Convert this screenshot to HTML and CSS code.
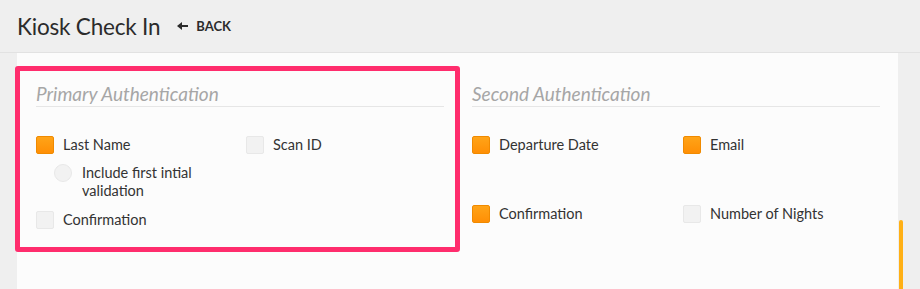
FILE: index.html
```html
<!DOCTYPE html>
<html lang="en">
<head>
    <meta charset="UTF-8">
    <meta name="viewport" content="width=device-width, initial-scale=1.0">
    <title>Kiosk Check In</title>
    <link rel="stylesheet" href="styles.css">
</head>
<body>
    <header class="topbar">
        <h1>Kiosk Check In</h1>
        <a class="back" href="#">
            <svg class="arrow" width="11" height="8" viewBox="0 0 11 8"><path d="M0 4 L5 0 L5 3 L11 3 L11 5 L5 5 L5 8 Z" fill="#2b2b2b"/></svg>
            BACK
        </a>
    </header>

    <main class="panel">
        <section class="auth-group highlight">
            <h2>Primary Authentication</h2>
            <div class="options">
                <div class="option-col">
                    <label class="check"><span class="box on"></span>Last Name</label>
                    <label class="radio"><span class="dot"></span>Include first intial<br>validation</label>
                    <label class="check"><span class="box"></span>Confirmation</label>
                </div>
                <div class="option-col">
                    <label class="check"><span class="box"></span>Scan ID</label>
                </div>
            </div>
        </section>

        <section class="auth-group second">
            <h2>Second Authentication</h2>
            <div class="options spaced">
                <label class="check"><span class="box on"></span>Departure Date</label>
                <label class="check"><span class="box on"></span>Email</label>
                <label class="check"><span class="box on"></span>Confirmation</label>
                <label class="check"><span class="box"></span>Number of Nights</label>
            </div>
        </section>

        <div class="scrollbar"></div>
    </main>
</body>
</html>
```

FILE: styles.css
```css
html, body {
    margin: 0;
    height: 100%;
}

body {
    font-family: "Lato", "Open Sans", sans-serif;
    color: #333;
    background: #efefef;
    overflow: hidden;
}

.topbar {
    height: 52px;
    display: flex;
    align-items: center;
    padding-left: 17px;
    border-bottom: 1px solid #e2e2e2;
}

.topbar h1 {
    margin: 0;
    font-size: 22.5px;
    font-weight: 400;
    color: #2b2b2b;
    letter-spacing: -0.2px;
}

.back {
    margin-left: 17px;
    display: flex;
    align-items: center;
    font-size: 13px;
    font-weight: 700;
    color: #2b2b2b;
    text-decoration: none;
}

.arrow {
    margin-right: 8px;
}

.panel {
    position: relative;
    margin: 0 22px 0 17px;
    height: calc(100% - 53px);
    background: #fcfcfc;
    display: flex;
    align-items: flex-start;
    padding-top: 13px;
    box-sizing: border-box;
}

.auth-group {
    width: 408px;
}

.auth-group h2 {
    margin: 0;
    padding-top: 10px;
    line-height: 25px;
    font-size: 19px;
    font-style: italic;
    font-weight: 400;
    color: #a6a6a6;
    border-bottom: 1px solid #e6e6e6;
}

.highlight {
    margin-left: -2px;
    border: 5px solid #ff2d6d;
    border-radius: 3px;
    padding: 0 11px 18px 16px;
}

.second {
    margin-left: 12px;
    padding-top: 5px;
}

.options {
    display: grid;
    grid-template-columns: 210px 1fr;
    margin-top: 29px;
}

.options.spaced {
    grid-template-columns: 211px 1fr;
    row-gap: 51px;
}

.option-col {
    display: flex;
    flex-direction: column;
}

.check, .radio {
    display: flex;
    align-items: center;
    font-size: 14.5px;
    line-height: 18px;
    color: #333;
}

.radio {
    align-items: flex-start;
    margin: 10px 0 11px 18px;
}

.box {
    width: 18px;
    height: 18px;
    margin-right: 9px;
    box-sizing: border-box;
    border: 1px solid #e8e8e8;
    border-radius: 2px;
    background: #f2f2f2;
    flex-shrink: 0;
}

.box.on {
    border-color: #f08a00;
    background: linear-gradient(#ffa418, #ff8f05);
}

.dot {
    width: 18px;
    height: 18px;
    margin-right: 10px;
    box-sizing: border-box;
    border: 1px solid #e8e8e8;
    border-radius: 50%;
    background: #f2f2f2;
    flex-shrink: 0;
}

.scrollbar {
    position: absolute;
    right: -5px;
    top: 167px;
    bottom: 0;
    width: 4px;
    border-radius: 2px 2px 0 0;
    background: #ffb015;
}
```
